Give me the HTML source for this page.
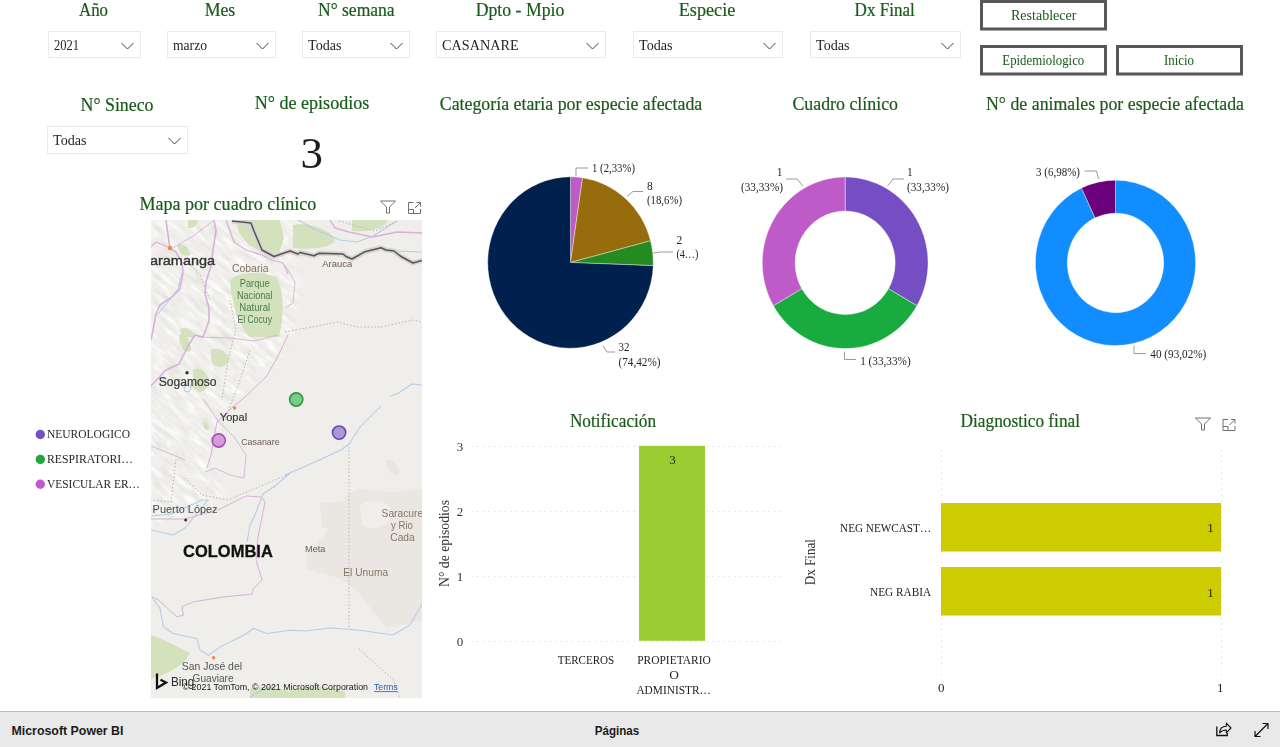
<!DOCTYPE html>
<html><head><meta charset="utf-8">
<style>
html,body{margin:0;padding:0;background:#fff;}
body{width:1280px;height:747px;position:relative;overflow:hidden;font-family:"Liberation Serif",serif;}
#footer{position:absolute;left:0;top:711px;width:1280px;height:36px;}
</style></head><body>
<svg width="1280" height="711" viewBox="0 0 1280 711" style="position:absolute;left:0;top:0;will-change:transform" font-family="Liberation Serif">
<text x="93.5" y="16" font-size="18.4" fill="#185a18" text-anchor="middle" textLength="29" lengthAdjust="spacingAndGlyphs" stroke="#185a18" stroke-width="0.2">Año</text>
<text x="220" y="16" font-size="18.4" fill="#185a18" text-anchor="middle" textLength="30.6" lengthAdjust="spacingAndGlyphs" stroke="#185a18" stroke-width="0.2">Mes</text>
<text x="356.3" y="16" font-size="18.4" fill="#185a18" text-anchor="middle" textLength="76.6" lengthAdjust="spacingAndGlyphs" stroke="#185a18" stroke-width="0.2">N° semana</text>
<text x="520" y="16" font-size="18.4" fill="#185a18" text-anchor="middle" textLength="88.6" lengthAdjust="spacingAndGlyphs" stroke="#185a18" stroke-width="0.2">Dpto - Mpio</text>
<text x="707" y="16" font-size="18.4" fill="#185a18" text-anchor="middle" textLength="56.6" lengthAdjust="spacingAndGlyphs" stroke="#185a18" stroke-width="0.2">Especie</text>
<text x="884.7" y="16" font-size="18.4" fill="#185a18" text-anchor="middle" textLength="60.2" lengthAdjust="spacingAndGlyphs" stroke="#185a18" stroke-width="0.2">Dx Final</text>
<rect x="48.5" y="31.5" width="92" height="26" fill="#fff" stroke="#eaeaea" stroke-width="1"/>
<text x="54" y="50" font-size="15" fill="#252525" textLength="25" lengthAdjust="spacingAndGlyphs">2021</text>
<path d="M121.5,43 l6,6 l6,-6" fill="none" stroke="#404040" stroke-width="1"/>
<rect x="167.5" y="31.5" width="108" height="26" fill="#fff" stroke="#eaeaea" stroke-width="1"/>
<text x="173" y="50" font-size="15" fill="#252525" textLength="34" lengthAdjust="spacingAndGlyphs">marzo</text>
<path d="M256.5,43 l6,6 l6,-6" fill="none" stroke="#404040" stroke-width="1"/>
<rect x="302.5" y="31.5" width="107" height="26" fill="#fff" stroke="#eaeaea" stroke-width="1"/>
<text x="308" y="50" font-size="15" fill="#252525" textLength="33.5" lengthAdjust="spacingAndGlyphs">Todas</text>
<path d="M390.5,43 l6,6 l6,-6" fill="none" stroke="#404040" stroke-width="1"/>
<rect x="436.5" y="31.5" width="169" height="26" fill="#fff" stroke="#eaeaea" stroke-width="1"/>
<text x="442" y="50" font-size="15" fill="#252525" textLength="76.6" lengthAdjust="spacingAndGlyphs">CASANARE</text>
<path d="M586.5,43 l6,6 l6,-6" fill="none" stroke="#404040" stroke-width="1"/>
<rect x="633.5" y="31.5" width="149" height="26" fill="#fff" stroke="#eaeaea" stroke-width="1"/>
<text x="639" y="50" font-size="15" fill="#252525" textLength="33.5" lengthAdjust="spacingAndGlyphs">Todas</text>
<path d="M763.5,43 l6,6 l6,-6" fill="none" stroke="#404040" stroke-width="1"/>
<rect x="810.5" y="31.5" width="150" height="26" fill="#fff" stroke="#eaeaea" stroke-width="1"/>
<text x="816" y="50" font-size="15" fill="#252525" textLength="33.5" lengthAdjust="spacingAndGlyphs">Todas</text>
<path d="M941.5,43 l6,6 l6,-6" fill="none" stroke="#404040" stroke-width="1"/>
<rect x="981.5" y="1.5" width="124" height="27.5" fill="#fff" stroke="#575757" stroke-width="3"/>
<text x="1043.7" y="20" font-size="14" fill="#185a18" text-anchor="middle" textLength="65.6" lengthAdjust="spacingAndGlyphs">Restablecer</text>
<rect x="981.5" y="46.5" width="124" height="27.5" fill="#fff" stroke="#575757" stroke-width="3"/>
<text x="1043.3" y="65" font-size="14" fill="#185a18" text-anchor="middle" textLength="82" lengthAdjust="spacingAndGlyphs">Epidemiologico</text>
<rect x="1117.5" y="46.5" width="124" height="27.5" fill="#fff" stroke="#575757" stroke-width="3"/>
<text x="1179" y="65" font-size="14" fill="#185a18" text-anchor="middle" textLength="30" lengthAdjust="spacingAndGlyphs">Inicio</text>
<text x="117" y="111" font-size="18.4" fill="#185a18" text-anchor="middle" textLength="73" lengthAdjust="spacingAndGlyphs" stroke="#185a18" stroke-width="0.2">N° Sineco</text>
<rect x="47.5" y="126.5" width="140" height="27" fill="#fff" stroke="#eaeaea" stroke-width="1"/>
<text x="53" y="145" font-size="15" fill="#252525" textLength="33.5" lengthAdjust="spacingAndGlyphs">Todas</text>
<path d="M168.5,138 l6,6 l6,-6" fill="none" stroke="#404040" stroke-width="1"/>
<text x="312" y="109.4" font-size="18.4" fill="#185a18" text-anchor="middle" textLength="114.7" lengthAdjust="spacingAndGlyphs" stroke="#185a18" stroke-width="0.2">N° de episodios</text>
<text x="311.8" y="168" font-size="45" fill="#1e1e1e" text-anchor="middle">3</text>
<text x="571" y="110" font-size="18.4" fill="#185a18" text-anchor="middle" textLength="262.5" lengthAdjust="spacingAndGlyphs" stroke="#185a18" stroke-width="0.2">Categoría etaria por especie afectada</text>
<text x="845.2" y="110" font-size="18.4" fill="#185a18" text-anchor="middle" textLength="105.6" lengthAdjust="spacingAndGlyphs" stroke="#185a18" stroke-width="0.2">Cuadro clínico</text>
<text x="1115" y="110" font-size="18.4" fill="#185a18" text-anchor="middle" textLength="258" lengthAdjust="spacingAndGlyphs" stroke="#185a18" stroke-width="0.2">N° de animales por especie afectada</text>
<text x="139.4" y="210" font-size="18.4" fill="#185a18" textLength="177" lengthAdjust="spacingAndGlyphs" stroke="#185a18" stroke-width="0.2">Mapa por cuadro clínico</text>
<path d="M380.5,201.0 H395.5 L389.5,207.0 V213.0 H386.5 V207.0 Z" fill="none" stroke="#707070" stroke-width="1" stroke-linejoin="round"/>
<path d="M413.5,202.5 H408.5 V213.5 H420.5 V209  M416.5,202.5 H420.5 V206.5 M408.5,209.5 H413.5 V213.5 M415,208 L420,203" fill="none" stroke="#707070" stroke-width="1"/>
<svg x="151" y="220" width="271" height="478" viewBox="151 220 271 478">
<rect x="151" y="220" width="271" height="478" fill="#efeeea"/>
<defs><filter id="mb" x="-20%" y="-20%" width="140%" height="140%"><feGaussianBlur stdDeviation="6"/></filter><mask id="andes" maskUnits="userSpaceOnUse" x="100" y="150" width="400" height="500"><path d="M120,200 L305,200 C300,250 302,290 292,335 C280,362 262,380 238,400 C220,420 210,460 212,470 L225,495 L200,515 L120,535 Z" fill="#fff" filter="url(#mb)"/></mask><filter id="hs" x="0" y="0" width="100%" height="100%"><feTurbulence type="fractalNoise" baseFrequency="0.2 0.05" numOctaves="4" seed="4"/><feColorMatrix type="matrix" values="0 0 0 0 1  0 0 0 0 1  0 0 0 0 1  3 0 0 0 -1.45"/></filter><filter id="hs2" x="0" y="0" width="100%" height="100%"><feTurbulence type="fractalNoise" baseFrequency="0.2 0.05" numOctaves="4" seed="4"/><feColorMatrix type="matrix" values="0 0 0 0 0.55  0 0 0 0 0.55  0 0 0 0 0.53  -3 0 0 0 1.25"/></filter></defs>
<g mask="url(#andes)"><g transform="rotate(-50 230 380)">
<rect x="-50" y="150" width="560" height="460" filter="url(#hs)" opacity="0.9"/>
<rect x="-50" y="150" width="560" height="460" filter="url(#hs2)" opacity="0.35"/>
</g></g>
<path d="M306.6,554.9 L331,527 L345,495.7 L358.8,488.7 L393.6,492.2 L422,488.7 L422,621 L386.7,628 L358.8,593 L341.4,579 L306.6,568.8 Z" fill="#eae7e2"/>
<path d="M360,505 C372,498 388,500 393,512 C392,526 375,532 362,525 Z" fill="#efeeea"/>
<path d="M320,502 L345,502 L345,530 L322,528 Z" fill="#eae6e1"/>
<path d="M386,461 C392,458 400,465 399,475 C393,478 386,470 386,461 Z" fill="#e9e5e0"/>
<path d="M236,220 L280,220 L284,238 L279,253 L263,252 L249,245 L239,233 Z" fill="#d3e1bd"/>
<path d="M293,225 C305,222 330,228 335,240 C332,248 310,250 293,248 Z" fill="#d3e1bd"/>
<path d="M352,220 L388,220 C385,228 372,232 352,231 Z" fill="#d3e1bd"/>
<path d="M230,281 C236,271 262,271 276,277 C285,292 284,316 279,337 L250,337 C238,326 232,302 230,281 Z" fill="#d3e1bd"/>
<path d="M177,245 C183,242 190,248 190,255 C184,258 178,252 177,245 Z" fill="#d3e1bd"/>
<path d="M188,220 L198,220 C197,226 192,229 188,228 Z" fill="#d3e1bd"/>
<path d="M180,329 C186,326 194,330 195,337 L182,337 Z" fill="#d3e1bd"/>
<path d="M211,350 C218,346 228,352 229,360 C225,368 215,370 211,360 Z" fill="#d3e1bd"/>
<path d="M193,370 C200,366 208,372 209,382 C207,392 198,396 193,386 Z" fill="#d3e1bd"/>
<path d="M179,335 C185,333 191,340 191,350 C186,355 180,350 179,335 Z" fill="#d3e1bd"/>
<path d="M203,422 C206,420 209,424 209,430 C205,431 203,427 203,422 Z" fill="#d3e1bd"/>
<path d="M151,635 C165,640 180,648 190,653 C185,662 178,670 151,679 Z" fill="#d3e1bd"/>
<path d="M250,689 C262,685 280,688 290,692 L290,698 L250,698 Z" fill="#d3e1bd"/>
<path d="M290,690 C310,684 330,686 345,692 L345,698 L290,698 Z" fill="#d3e1bd"/>
<path d="M166,220 L169,242 L170,248 L176,252 L182,263 L183,273 L180,289 L172,297 L160,305 L156,314 L153,330 L151,340" fill="none" stroke="#d9b0dc" stroke-width="1.6" stroke-linejoin="round"/>
<path d="M150,248 L156,242 L168,247" fill="none" stroke="#d9b0dc" stroke-width="1.2" stroke-linejoin="round"/>
<path d="M214,220 L216,231 L213,250 L211,266 L206,282 L205,294 L209,308 L209,321 L203,337 L195,335 L188,346 L179,364 L166,370 L151,386" fill="none" stroke="#d9b0dc" stroke-width="1.6" stroke-linejoin="round"/>
<path d="M173,248 L193,236 L213,221" fill="none" stroke="#d9b0dc" stroke-width="0.9" stroke-linejoin="round"/>
<path d="M226,220 L234,242 L246,250 L262,255 L272,260 L283,263 L288,274" fill="none" stroke="#d9b0dc" stroke-width="1.2" stroke-linejoin="round"/>
<path d="M198,337 L230,338 L254,341 L278,335" fill="none" stroke="#d9b0dc" stroke-width="0.9" stroke-linejoin="round"/>
<path d="M288,335 L278,356 L266,377 L246,396 L227,412 L217,422 L214,438 L211,455 L207,468" fill="none" stroke="#d9b0dc" stroke-width="1.0" stroke-linejoin="round"/>
<path d="M203,399 L219,422 L235,438 L246,455 L244,478 L230,475 L215,468 L205,472" fill="none" stroke="#d9b0dc" stroke-width="0.9" stroke-linejoin="round"/>
<path d="M330,220 L335,228 L349,232 L373,237 L397,232 L422,233" fill="none" stroke="#d9b0dc" stroke-width="1.4" stroke-linejoin="round"/>
<path d="M285,265 L295,282 L293,303 L285,308" fill="none" stroke="#d9b0dc" stroke-width="0.9" stroke-linejoin="round"/>
<path d="M151,446 L171,454 L185,460" fill="none" stroke="#d9b0dc" stroke-width="0.9" stroke-linejoin="round"/>
<path d="M151,519 L185,519 L220,509 L246,496 L261,497 L265,502 L258,537 L256,560 L262,580 L253.7,588.4 L252,594.2 L225.3,596.7 L193.5,601.8 L181.8,606.8 L183.5,615.1 L176.8,616.8 L158.4,600 L151.7,596.7" fill="none" stroke="#d9b0dc" stroke-width="1.0" stroke-linejoin="round"/>
<path d="M298,220 L314,229 L340,240 L357,242 L373,236 L397,221" fill="none" stroke="#b3cde6" stroke-width="1.05" stroke-linejoin="round"/>
<path d="M397,251 L422,252" fill="none" stroke="#b3cde6" stroke-width="1.05" stroke-linejoin="round"/>
<path d="M182,273 L178,289 L158,314" fill="none" stroke="#b3cde6" stroke-width="1.05" stroke-linejoin="round"/>
<path d="M184,387 C186,384 191,385 191,389 C189,393 184,393 184,387 Z" fill="none" stroke="#b3cde6" stroke-width="1.05" stroke-linejoin="round"/>
<path d="M390,396 L397,394 L412,384 L422,385" fill="none" stroke="#b3cde6" stroke-width="1.05" stroke-linejoin="round"/>
<path d="M285,475 L306,466 L341,450 L349,444 L360,427 L381,406" fill="none" stroke="#b3cde6" stroke-width="1.05" stroke-linejoin="round"/>
<path d="M151,516 L171,514 L202,500 L208,500 L185,528 L173,535 L151,530" fill="none" stroke="#b3cde6" stroke-width="1.05" stroke-linejoin="round"/>
<path d="M263,494 L255,515 L250,525 L247,542" fill="none" stroke="#b3cde6" stroke-width="1.05" stroke-linejoin="round"/>
<path d="M263,494 L275,486 L289,474" fill="none" stroke="#b3cde6" stroke-width="1.05" stroke-linejoin="round"/>
<path d="M151.7,596.7 L160,608.4 L163.4,626.8 L173.4,633.5 L196.8,638.6 L200.2,650.3 L208.5,655.3 L220.2,646.9 L243.7,635.2 L253.7,628.5 L267,633.5 L290,630.2 L306,631 L330,628 L358,630 L393,635 L410,625 L422,604" fill="none" stroke="#b3cde6" stroke-width="1.05" stroke-linejoin="round"/>
<path d="M250,697 L262,690 L275,686" fill="none" stroke="#b3cde6" stroke-width="1.05" stroke-linejoin="round"/>
<path d="M339,221 L375,231 L397,221" fill="none" stroke="#b9b6b2" stroke-width="1" stroke-dasharray="1.5,2"/>
<path d="M285,332 L317,326 L338,322 L357,327 L381,327 L413,320 L422,322" fill="none" stroke="#b9b6b2" stroke-width="1" stroke-dasharray="1.5,2"/>
<path d="M349,447 L349,628" fill="none" stroke="#b9b6b2" stroke-width="1" stroke-dasharray="1.5,2"/>
<path d="M150,500 L173,502" fill="none" stroke="#b9b6b2" stroke-width="1" stroke-dasharray="1.5,2"/>
<path d="M176,459 L171,502" fill="none" stroke="#b9b6b2" stroke-width="1" stroke-dasharray="1.5,2"/>
<path d="M185,478 L202,495 L228,500 L254,489 L289,474" fill="none" stroke="#b9b6b2" stroke-width="1" stroke-dasharray="1.5,2"/>
<path d="M186,260 L200,275 L210,300" fill="none" stroke="#b9b6b2" stroke-width="1" stroke-dasharray="1.5,2"/>
<path d="M230,300 L236,330 L228,360 L222,400" fill="none" stroke="#b9b6b2" stroke-width="1" stroke-dasharray="1.5,2"/>
<path d="M250,350 L240,380 L225,420" fill="none" stroke="#b9b6b2" stroke-width="1" stroke-dasharray="1.5,2"/>
<path d="M358.8,648.8 L393.6,680 L400,698" fill="none" stroke="#b9b6b2" stroke-width="1" stroke-dasharray="1.5,2"/>
<path d="M232,221 L251,223 L254,231 L262,250 L274,256.5 L290,251 L298,254 L300,252.5 L314,255.7 L319,253.3 L343,254 L346,256.5 L352,259 L365,251.7 L381,247.7 L386,250 L394,251 L401,256.5 L413,263 L422,260.5" fill="none" stroke="#d6d5d2" stroke-width="5" stroke-linejoin="round"/>
<path d="M232,221 L251,223 L254,231 L262,250 L274,256.5 L290,251 L298,254 L300,252.5 L314,255.7 L319,253.3 L343,254 L346,256.5 L352,259 L365,251.7 L381,247.7 L386,250 L394,251 L401,256.5 L413,263 L422,260.5" fill="none" stroke="#555" stroke-width="1.5" stroke-linejoin="round"/>
<circle cx="170" cy="248" r="2.3" fill="#f28848"/>
<circle cx="234.6" cy="408" r="1.7" fill="#f28848"/>
<circle cx="213.6" cy="657.8" r="1.7" fill="#f28848"/>
<circle cx="187" cy="372.7" r="1.7" fill="#333"/>
<circle cx="185.7" cy="520" r="1.5" fill="#333"/>
<text x="150" y="264.5" font-size="13.5" fill="#333" textLength="65" lengthAdjust="spacingAndGlyphs" font-family="Liberation Sans" stroke="#333" stroke-width="0.35">aramanga</text>
<text x="232" y="271.5" font-size="10.5" fill="#85705f" textLength="36.5" lengthAdjust="spacingAndGlyphs" font-family="Liberation Sans">Cobaria</text>
<text x="254.7" y="286.5" font-size="10.5" fill="#4e7c4f" text-anchor="middle" textLength="30" lengthAdjust="spacingAndGlyphs" font-family="Liberation Sans">Parque</text>
<text x="254.7" y="298.5" font-size="10.5" fill="#4e7c4f" text-anchor="middle" textLength="35.5" lengthAdjust="spacingAndGlyphs" font-family="Liberation Sans">Nacional</text>
<text x="254.7" y="311" font-size="10.5" fill="#4e7c4f" text-anchor="middle" textLength="31" lengthAdjust="spacingAndGlyphs" font-family="Liberation Sans">Natural</text>
<text x="254.7" y="322.5" font-size="10.5" fill="#4e7c4f" text-anchor="middle" textLength="34.5" lengthAdjust="spacingAndGlyphs" font-family="Liberation Sans">El Cocuy</text>
<text x="322.3" y="266.5" font-size="9.5" fill="#6e5a50" textLength="30" lengthAdjust="spacingAndGlyphs" font-family="Liberation Sans">Arauca</text>
<text x="158.8" y="386" font-size="12" fill="#3a3a3a" textLength="57.8" lengthAdjust="spacingAndGlyphs" font-family="Liberation Sans" stroke="#3a3a3a" stroke-width="0.2">Sogamoso</text>
<text x="219.8" y="420.5" font-size="11.5" fill="#3a3a3a" textLength="27.3" lengthAdjust="spacingAndGlyphs" font-family="Liberation Sans" stroke="#3a3a3a" stroke-width="0.2">Yopal</text>
<text x="241.2" y="445" font-size="9.8" fill="#6e5a50" textLength="38.5" lengthAdjust="spacingAndGlyphs" font-family="Liberation Sans">Casanare</text>
<text x="152.6" y="512.7" font-size="10.8" fill="#4a4a4a" textLength="65" lengthAdjust="spacingAndGlyphs" font-family="Liberation Sans">Puerto López</text>
<text x="183.1" y="556.6" font-size="16" fill="#111" textLength="89.7" lengthAdjust="spacingAndGlyphs" font-weight="bold" font-family="Liberation Sans" stroke="#111" stroke-width="0.3">COLOMBIA</text>
<text x="305" y="551.9" font-size="9.5" fill="#6e5a50" textLength="20.4" lengthAdjust="spacingAndGlyphs" font-family="Liberation Sans">Meta</text>
<text x="381.6" y="517" font-size="10.5" fill="#857565" textLength="41.5" lengthAdjust="spacingAndGlyphs" font-family="Liberation Sans">Saracure</text>
<text x="402" y="529.2" font-size="10.5" fill="#857565" text-anchor="middle" textLength="21.8" lengthAdjust="spacingAndGlyphs" font-family="Liberation Sans">y Rio</text>
<text x="402.5" y="541.4" font-size="10.5" fill="#857565" text-anchor="middle" textLength="24.4" lengthAdjust="spacingAndGlyphs" font-family="Liberation Sans">Cada</text>
<text x="343.3" y="575.7" font-size="10.5" fill="#857565" textLength="44.8" lengthAdjust="spacingAndGlyphs" font-family="Liberation Sans">El Unuma</text>
<text x="181.8" y="669.8" font-size="10.8" fill="#555" textLength="60.2" lengthAdjust="spacingAndGlyphs" font-family="Liberation Sans">San José del</text>
<text x="192.6" y="682" font-size="10.8" fill="#555" textLength="41" lengthAdjust="spacingAndGlyphs" font-family="Liberation Sans">Guaviare</text>
<path d="M157,673.5 V688 L166,682.5 L160.5,679.8" fill="none" stroke="#111" stroke-width="2.3" stroke-linejoin="miter"/>
<text x="170.9" y="686.2" font-size="13" fill="#2a2a2a" textLength="23.4" lengthAdjust="spacingAndGlyphs" font-family="Liberation Sans">Bing</text>
<text x="182.6" y="690.4" font-size="9" fill="#1a1a1a" textLength="185.4" lengthAdjust="spacingAndGlyphs" font-family="Liberation Sans">© 2021 TomTom, © 2021 Microsoft Corporation</text>
<text x="374" y="690.4" font-size="9" fill="#1f5fc0" textLength="23.7" lengthAdjust="spacingAndGlyphs" font-family="Liberation Sans">Terms</text>
<line x1="374" y1="691.6" x2="397.7" y2="691.6" stroke="#1f5fc0" stroke-width="0.8"/>
<circle cx="296.2" cy="399.5" r="6.6" fill="#1AAB40" fill-opacity="0.55" stroke="#2a9a40" stroke-width="1.6"/>
<circle cx="339.1" cy="432.6" r="6.6" fill="#744EC2" fill-opacity="0.55" stroke="#6547b8" stroke-width="1.6"/>
<circle cx="218.7" cy="440.5" r="6.6" fill="#BE5BC8" fill-opacity="0.55" stroke="#a850b5" stroke-width="1.6"/>
</svg>
<circle cx="40.3" cy="434.5" r="4.7" fill="#744EC2"/>
<text x="47" y="437.8" font-size="13.4" fill="#262626" textLength="83" lengthAdjust="spacingAndGlyphs">NEUROLOGICO</text>
<circle cx="40.3" cy="459.4" r="4.7" fill="#1AAB40"/>
<text x="47" y="462.7" font-size="13.4" fill="#262626" textLength="86" lengthAdjust="spacingAndGlyphs">RESPIRATORI…</text>
<circle cx="40.3" cy="484.3" r="4.7" fill="#BE5BC8"/>
<text x="47" y="487.6" font-size="13.4" fill="#262626" textLength="93" lengthAdjust="spacingAndGlyphs">VESICULAR ER…</text>
<g stroke="#fff" stroke-width="0.4" transform="translate(570.5,262.5) scale(0.966,1) translate(-570.5,-262.5)">
<path fill="#BF5BC8" d="M570.5,262.5 L570.50,176.80 A85.7,85.7 0 0 1 582.98,177.71 Z"/>
<path fill="#976C0D" d="M570.5,262.5 L582.98,177.71 A85.7,85.7 0 0 1 653.41,240.82 Z"/>
<path fill="#238B22" d="M570.5,262.5 L653.41,240.82 A85.7,85.7 0 0 1 656.14,265.63 Z"/>
<path fill="#00204E" d="M570.5,262.5 L656.14,265.63 A85.7,85.7 0 1 1 570.50,176.80 Z"/>
</g>
<g stroke="#fff" stroke-width="0.4" transform="translate(845.15,262.8) scale(0.966,1) translate(-845.15,-262.8)">
<path fill="#744EC2" d="M845.15,177.00 A85.8,85.8 0 0 1 919.45,305.70 L890.01,288.70 A51.8,51.8 0 0 0 845.15,211.00 Z"/>
<path fill="#1AAB40" d="M919.45,305.70 A85.8,85.8 0 0 1 770.85,305.70 L800.29,288.70 A51.8,51.8 0 0 0 890.01,288.70 Z"/>
<path fill="#BE5BC8" d="M770.85,305.70 A85.8,85.8 0 0 1 845.15,177.00 L845.15,211.00 A51.8,51.8 0 0 0 800.29,288.70 Z"/>
</g>
<g stroke="#fff" stroke-width="0.4" transform="translate(1115.5,262.9) scale(0.9686,1) translate(-1115.5,-262.9)">
<path fill="#118DFF" d="M1115.50,180.20 A82.7,82.7 0 1 1 1080.40,188.02 L1094.38,217.85 A49.75,49.75 0 1 0 1115.50,213.15 Z"/>
<path fill="#6B007B" d="M1080.40,188.02 A82.7,82.7 0 0 1 1115.50,180.20 L1115.50,213.15 A49.75,49.75 0 0 0 1094.38,217.85 Z"/>
</g>
<path d="M576,176 V168 H588" fill="none" stroke="#9a9a9a" stroke-width="1"/>
<path d="M627,196.5 L633,191.5 H643" fill="none" stroke="#9a9a9a" stroke-width="1"/>
<path d="M653,253 L660,252 H673" fill="none" stroke="#9a9a9a" stroke-width="1"/>
<path d="M603,346 L607,352 H615" fill="none" stroke="#9a9a9a" stroke-width="1"/>
<text x="592" y="172" font-size="11.5" fill="#252525" textLength="43" lengthAdjust="spacingAndGlyphs">1 (2,33%)</text>
<text x="647" y="189.5" font-size="11.5" fill="#252525">8</text>
<text x="647" y="203.5" font-size="11.5" fill="#252525" textLength="35" lengthAdjust="spacingAndGlyphs">(18,6%)</text>
<text x="676.4" y="243.5" font-size="11.5" fill="#252525">2</text>
<text x="676.4" y="258" font-size="11.5" fill="#252525" textLength="22" lengthAdjust="spacingAndGlyphs">(4…)</text>
<text x="618.5" y="351" font-size="11.5" fill="#252525" textLength="11" lengthAdjust="spacingAndGlyphs">32</text>
<text x="618.5" y="365.5" font-size="11.5" fill="#252525" textLength="42" lengthAdjust="spacingAndGlyphs">(74,42%)</text>
<path d="M887.5,186 L893,179 H904" fill="none" stroke="#9a9a9a" stroke-width="1"/>
<path d="M803,186 L797,179 H786" fill="none" stroke="#9a9a9a" stroke-width="1"/>
<path d="M844.5,351.5 V359.5 H856" fill="none" stroke="#9a9a9a" stroke-width="1"/>
<text x="907" y="175.5" font-size="11.5" fill="#252525">1</text>
<text x="907" y="191" font-size="11.5" fill="#252525" textLength="42" lengthAdjust="spacingAndGlyphs">(33,33%)</text>
<text x="782.5" y="175.5" font-size="11.5" fill="#252525" text-anchor="end">1</text>
<text x="783" y="191" font-size="11.5" fill="#252525" text-anchor="end" textLength="42" lengthAdjust="spacingAndGlyphs">(33,33%)</text>
<text x="860.2" y="364.5" font-size="11.5" fill="#252525" textLength="50.5" lengthAdjust="spacingAndGlyphs">1 (33,33%)</text>
<path d="M1084.5,171 H1096.5 L1098.5,179" fill="none" stroke="#9a9a9a" stroke-width="1"/>
<path d="M1134,345.5 L1134,353.5 H1146" fill="none" stroke="#9a9a9a" stroke-width="1"/>
<text x="1036" y="176" font-size="11.5" fill="#252525" textLength="44" lengthAdjust="spacingAndGlyphs">3 (6,98%)</text>
<text x="1150.3" y="357.5" font-size="11.5" fill="#252525" textLength="56" lengthAdjust="spacingAndGlyphs">40 (93,02%)</text>
<text x="613" y="427" font-size="18.4" fill="#185a18" text-anchor="middle" textLength="86.2" lengthAdjust="spacingAndGlyphs" stroke="#185a18" stroke-width="0.2">Notificación</text>
<line x1="471.5" y1="446.5" x2="783" y2="446.5" stroke="#d6d6d6" stroke-width="1" stroke-dasharray="1,4.6"/>
<text x="463.2" y="451.2" font-size="13" fill="#333" text-anchor="end">3</text>
<line x1="471.5" y1="511.5" x2="783" y2="511.5" stroke="#d6d6d6" stroke-width="1" stroke-dasharray="1,4.6"/>
<text x="463.2" y="516.2" font-size="13" fill="#333" text-anchor="end">2</text>
<line x1="471.5" y1="576.5" x2="783" y2="576.5" stroke="#d6d6d6" stroke-width="1" stroke-dasharray="1,4.6"/>
<text x="463.2" y="581.2" font-size="13" fill="#333" text-anchor="end">1</text>
<line x1="471.5" y1="641.5" x2="783" y2="641.5" stroke="#d6d6d6" stroke-width="1" stroke-dasharray="1,4.6"/>
<text x="463.2" y="646.2" font-size="13" fill="#333" text-anchor="end">0</text>
<rect x="639" y="445.8" width="66" height="195" fill="#9ACD32"/>
<text x="672.5" y="464" font-size="13" fill="#222" text-anchor="middle">3</text>
<text transform="translate(449.3,587) rotate(-90)" font-size="13.7" fill="#333" textLength="87" lengthAdjust="spacingAndGlyphs">N° de episodios</text>
<text x="586" y="663.5" font-size="13.3" fill="#222" text-anchor="middle" textLength="56.5" lengthAdjust="spacingAndGlyphs">TERCEROS</text>
<text x="674" y="663.5" font-size="13.3" fill="#222" text-anchor="middle" textLength="73.6" lengthAdjust="spacingAndGlyphs">PROPIETARIO</text>
<text x="674" y="678.5" font-size="13.3" fill="#222" text-anchor="middle">O</text>
<text x="673.7" y="693.5" font-size="13.3" fill="#222" text-anchor="middle" textLength="74.6" lengthAdjust="spacingAndGlyphs">ADMINISTR…</text>
<text x="1020.3" y="427" font-size="18.4" fill="#185a18" text-anchor="middle" textLength="119.4" lengthAdjust="spacingAndGlyphs" stroke="#185a18" stroke-width="0.2">Diagnostico final</text>
<path d="M1195.5,418.0 H1210.5 L1204.5,424.0 V430.0 H1201.5 V424.0 Z" fill="none" stroke="#707070" stroke-width="1" stroke-linejoin="round"/>
<path d="M1228.0,419.5 H1223.0 V430.5 H1235.0 V426  M1231.0,419.5 H1235.0 V423.5 M1223.0,426.5 H1228.0 V430.5 M1229.5,425 L1234.5,420" fill="none" stroke="#707070" stroke-width="1"/>
<line x1="941.5" y1="450" x2="941.5" y2="678" stroke="#d6d6d6" stroke-width="1" stroke-dasharray="1,4.6"/>
<line x1="1221.5" y1="450" x2="1221.5" y2="678" stroke="#d6d6d6" stroke-width="1" stroke-dasharray="1,4.6"/>
<rect x="941" y="503" width="280" height="48.5" fill="#CCCC00"/>
<rect x="941" y="567" width="280" height="48.5" fill="#CCCC00"/>
<text x="1210.5" y="532" font-size="13" fill="#222" text-anchor="middle">1</text>
<text x="1210.5" y="597" font-size="13" fill="#222" text-anchor="middle">1</text>
<text x="931.1" y="532.1" font-size="13.3" fill="#222" text-anchor="end" textLength="91" lengthAdjust="spacingAndGlyphs">NEG NEWCAST…</text>
<text x="931.1" y="596.3" font-size="13.3" fill="#222" text-anchor="end" textLength="61" lengthAdjust="spacingAndGlyphs">NEG RABIA</text>
<text transform="translate(814.8,585.3) rotate(-90)" font-size="14.5" fill="#333" textLength="46.3" lengthAdjust="spacingAndGlyphs">Dx Final</text>
<text x="941.3" y="692" font-size="13" fill="#222" text-anchor="middle">0</text>
<text x="1220.3" y="692" font-size="13" fill="#222" text-anchor="middle">1</text>
</svg>
<div id="footer">
<svg width="1280" height="36" viewBox="0 711 1280 36" style="position:absolute;left:0;top:0">
<rect x="0" y="711" width="1280" height="36" fill="#e9e9e9"/>
<line x1="0" y1="711.5" x2="1280" y2="711.5" stroke="#bdbdbd" stroke-width="1"/>
<text x="11.5" y="735" font-family="Liberation Sans" font-size="13" font-weight="bold" fill="#1b1b1b" textLength="112" lengthAdjust="spacingAndGlyphs">Microsoft Power BI</text>
<text x="594.7" y="735" font-family="Liberation Sans" font-size="13" font-weight="bold" fill="#1b1b1b" textLength="44.5" lengthAdjust="spacingAndGlyphs">Páginas</text>
<path d="M1216.8,726.5 V735.5 H1227.3 V733" fill="none" stroke="#111" stroke-width="1.3"/>
<path d="M1219.6,732.8 C1219.8,728.5 1222.5,726.2 1226.3,726.2 V723.2 L1231,728 L1226.3,732.8 V730 C1223.5,730 1221.2,731 1219.6,732.8 Z" fill="none" stroke="#111" stroke-width="1.1" stroke-linejoin="round"/>
<path d="M1255,736.5 L1268,723.5 M1262.5,723.5 H1268 V729 M1255,731 V736.5 H1260.5" fill="none" stroke="#111" stroke-width="1.2"/>
</svg>
</div>
</body></html>
